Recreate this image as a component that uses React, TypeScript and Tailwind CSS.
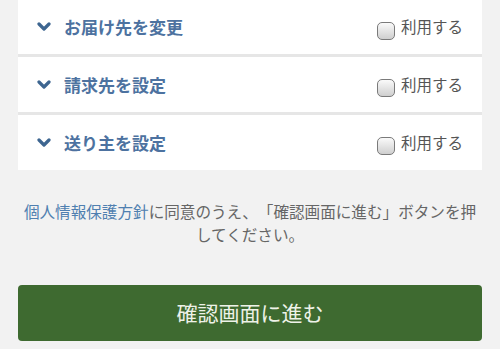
import React from "react";

function Chevron() {
  return (
    <svg width="14" height="10" viewBox="0 0 14 10" className="shrink-0">
      <polyline points="2,2 7,7 12,2" fill="none" stroke="#3d6590" strokeWidth="3.2" strokeLinecap="round" strokeLinejoin="round" />
    </svg>
  );
}

function Row({ label, h }: { label: string; h: string }) {
  return (
    <div className={`bg-white flex items-center justify-between pl-[19px] pr-[19px] ${h}`}>
      <div className="flex items-center gap-[13px]">
        <Chevron />
        <span className="text-[17px] font-bold text-[#4d72a0]">{label}</span>
      </div>
      <div className="flex items-center gap-[6px]">
        <span className="w-[18px] h-[18px] rounded-[5px] border border-[#7a7a7a] bg-gradient-to-b from-[#fafafa] to-[#cfcfcf] mt-[7px]" />
        <span className="text-[15.5px] text-[#555555]">利用する</span>
      </div>
    </div>
  );
}

export default function App() {
  return (
    <div
      className="w-[500px] h-[349px] bg-[#f2f2f2] overflow-hidden"
      style={{ fontFamily: '"Noto Sans CJK JP", "Noto Sans", sans-serif' }}
    >
      <div className="mx-[18px] flex flex-col gap-[3px] bg-[#e6e6e6]">
        <Row label="お届け先を変更" h="h-[54px]" />
        <Row label="請求先を設定" h="h-[55px]" />
        <Row label="送り主を設定" h="h-[55px]" />
      </div>
      <p className="mt-[30px] px-[18px] text-center text-[15.6px] leading-[23px] text-[#666666] [text-spacing-trim:space-all]">
        <span className="text-[#4f7fb0]">個人情報保護方針</span>に同意のうえ、「確認画面に進む」ボタンを押してください。
      </p>
      <button className="mt-[39px] mx-[18px] w-[464px] h-[56px] rounded-[4px] bg-[#3e6a30] text-[21px] text-[#eef2e8] flex items-center justify-center">
        確認画面に進む
      </button>
    </div>
  );
}
